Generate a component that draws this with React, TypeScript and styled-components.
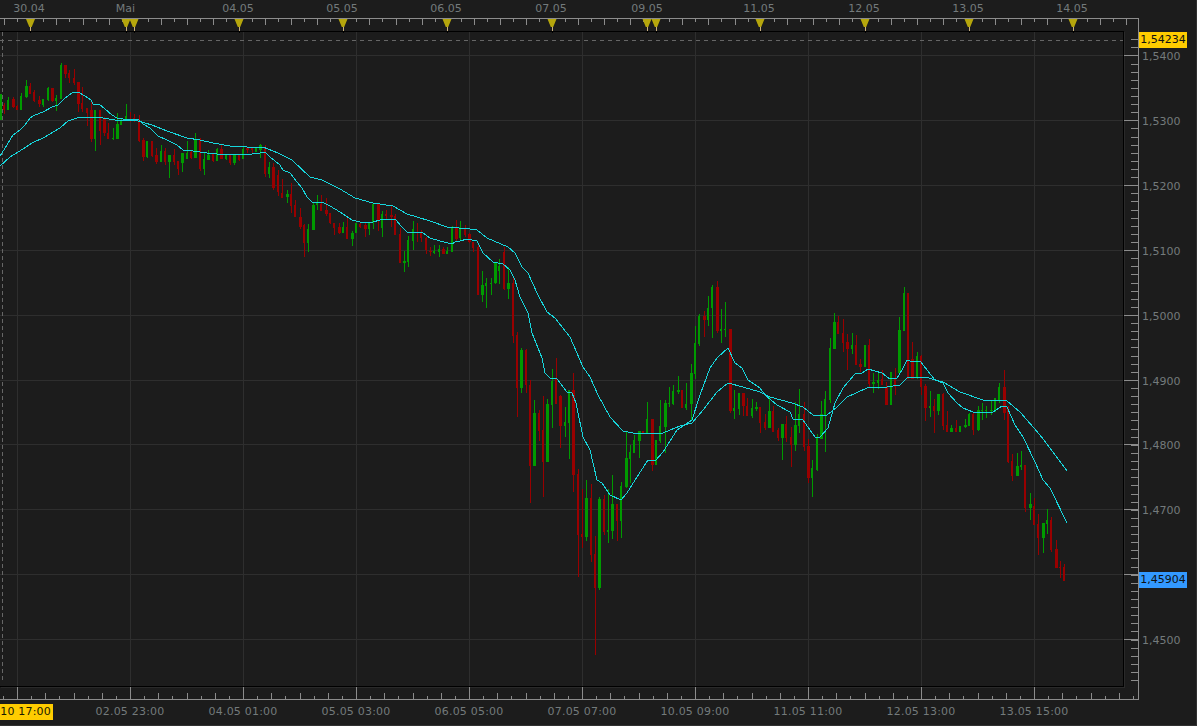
import React from "react";
import styled, { createGlobalStyle } from "styled-components";

const GlobalStyle = createGlobalStyle`
  html, body { margin: 0; padding: 0; background: #1c1c1c; overflow: hidden; }
`;

const BG = "#1c1c1c";
const AXIS = "#8c8c8c";
const GRID = "#2e2e2e";
const UP = "#009a00";
const DOWN = "#990000";
const MA = "#17d6dc";

// kind, high, body top, body bottom, low (pixel rows)
type Candle = ["g" | "r", number, number, number, number];
const raw = `g 94 94 120 120;r 103 105 110 114;g 97 100 110 110;r 97 99 107 108;r 105 106 110 110;g 93 96 110 110;g 80 86 97 98;r 83 86 94 94;r 90 92 101 102;r 96 100 104 107;g 99 99 105 107;g 87 88 100 101;r 88 88 101 102;g 95 98 101 111;g 63 65 99 99;r 65 65 74 78;r 70 73 78 83;r 69 78 83 85;r 82 82 104 112;r 87 103 109 112;r 108 108 113 126;r 102 110 139 142;g 110 110 139 151;r 110 110 131 145;r 117 118 133 136;r 123 133 139 139;g 128 138 139 140;g 113 124 139 139;g 118 120 125 125;g 104 116 120 120;r 112 120 121 122;r 114 118 121 122;r 115 120 141 142;r 138 140 157 161;g 141 141 157 158;r 141 141 156 157;r 148 155 162 164;g 145 151 162 162;r 148 151 162 165;g 155 155 162 178;r 149 155 162 165;r 161 161 169 175;g 153 153 163 172;g 141 153 159 159;r 150 152 158 159;g 133 139 158 158;r 138 140 169 171;g 153 159 169 175;g 150 155 160 160;r 153 153 161 162;g 148 149 161 161;r 145 149 159 159;g 154 155 159 160;r 155 155 163 165;g 154 154 163 165;r 154 155 160 161;g 147 149 159 159;r 148 148 150 153;r 148 148 150 153;g 147 148 152 152;g 144 145 150 158;r 145 147 174 177;g 162 167 174 178;r 163 167 188 190;r 170 175 192 196;r 179 193 198 198;g 190 194 197 203;r 183 194 206 213;r 200 205 217 217;r 208 217 227 229;r 224 225 243 257;g 224 229 243 252;g 203 205 230 230;g 195 203 205 210;r 195 204 211 211;r 198 210 214 216;r 213 213 223 224;r 223 223 228 235;r 223 227 233 234;g 222 227 233 233;r 218 227 239 239;g 231 233 239 246;g 223 223 233 233;r 222 224 227 228;r 223 225 229 237;g 222 223 229 235;g 203 204 223 229;r 203 204 221 231;g 211 214 228 237;r 210 214 216 219;r 206 215 217 227;r 214 216 235 235;r 228 234 263 263;g 251 261 263 272;g 236 240 262 267;g 221 229 241 250;r 223 232 233 242;r 230 232 238 242;r 237 238 250 254;r 247 251 252 256;g 245 251 253 254;g 245 249 252 257;r 247 249 254 254;g 247 251 254 254;g 226 227 252 252;r 220 227 239 241;g 221 227 238 241;r 225 229 235 237;r 233 234 242 243;r 242 242 248 252;r 245 247 295 295;g 271 285 295 302;g 278 283 286 308;g 278 283 284 295;g 262 263 283 284;g 259 266 271 284;r 247 252 289 290;g 267 283 289 299;r 276 283 336 343;r 332 335 388 417;g 348 350 388 393;r 349 350 385 393;r 380 385 466 503;g 400 413 466 466;r 410 413 431 441;r 396 430 462 497;g 399 404 462 462;g 369 381 405 428;r 358 378 404 404;r 395 396 426 448;g 407 422 426 437;g 390 390 423 459;r 373 390 475 492;r 469 474 535 577;r 489 534 537 548;g 480 498 537 541;r 484 498 555 562;r 536 554 588 655;g 497 499 588 590;r 495 499 532 535;g 489 530 532 543;g 475 504 531 539;r 504 504 521 541;g 482 486 521 538;g 432 458 487 488;g 445 452 459 483;g 435 440 453 453;g 431 431 441 458;r 431 431 433 433;g 402 419 433 433;r 419 419 465 471;g 440 440 465 465;g 400 426 441 443;g 400 403 427 453;g 387 403 404 407;g 385 391 404 405;g 376 390 392 394;r 390 390 408 408;g 383 404 408 410;g 364 373 404 420;g 326 343 374 379;g 314 316 344 346;r 311 316 320 337;g 296 308 320 326;g 285 287 308 338;r 281 287 331 333;g 309 329 331 343;g 302 329 330 337;r 329 329 411 413;g 390 408 411 419;g 393 393 409 415;r 393 393 406 416;r 398 406 416 416;g 399 408 416 418;g 402 407 409 411;r 407 407 423 433;r 414 422 428 430;g 397 411 428 428;r 406 411 432 432;r 428 430 438 441;g 424 424 438 460;r 416 424 438 442;r 427 437 445 467;g 402 425 445 451;g 389 414 426 433;r 402 414 447 451;r 439 446 478 483;g 460 468 478 497;g 434 437 470 471;g 401 414 439 439;g 391 399 415 452;g 338 348 400 403;g 313 322 349 349;r 316 322 334 334;r 319 333 343 352;r 334 342 349 370;g 333 345 349 354;r 335 345 365 365;r 359 364 367 372;g 345 345 367 367;r 339 345 384 388;g 373 382 384 393;g 372 380 383 389;r 370 379 385 385;r 382 387 405 405;g 372 372 405 405;r 368 378 387 395;g 317 330 373 373;g 287 293 331 331;r 293 293 379 379;r 342 359 379 379;g 352 356 377 379;r 355 356 387 395;r 384 386 408 421;g 391 406 408 417;r 399 406 411 433;g 394 394 411 415;r 393 394 426 430;r 411 425 432 432;g 425 428 432 432;r 420 428 432 432;g 426 426 432 432;g 419 425 427 428;g 413 414 426 426;r 413 414 430 435;g 406 410 430 431;g 403 410 411 420;g 406 410 411 418;g 401 410 411 415;g 398 398 412 412;g 383 387 401 403;r 370 387 413 420;r 406 407 462 463;r 454 461 476 481;g 453 466 476 476;g 451 465 467 470;r 465 465 508 512;g 493 504 508 520;r 498 506 525 525;r 514 524 538 555;g 523 523 538 553;g 509 520 524 534;r 517 520 550 552;r 540 549 568 568;r 561 567 568 578;r 564 567 581 581`;
const candles = raw.split(";").map((row) => {
  const [k, ...n] = row.split(" ");
  return [k, ...n.map(Number)] as Candle;
});

const fast = "0,156 7,145 13,135 20,130 25,125 30,118 35,115 43,112 52,107 58,105 65,98 72,93 78,92 85,96 91,100 93,104 99,104 105,109 112,115 117,118 123,119 138,119 143,124 150,128 158,136 167,140 177,145 183,150 193,151 200,152 207,153 217,154 230,155 243,154 252,154 260,153 265,152 270,157 280,165 283,170 290,173 297,182 302,188 307,197 312,202 322,202 330,206 340,212 352,220 360,222 373,222 380,220 395,219 402,227 407,232 422,232 430,238 440,241 452,244 455,242 460,241 467,239 477,241 483,253 493,262 503,264 510,270 515,280 520,297 528,313 532,333 542,358 545,373 550,378 557,379 567,392 572,393 576,403 583,437 590,450 597,480 602,483 610,495 621,500 627,493 637,477 648,460 655,461 663,452 677,430 692,420 700,395 710,368 717,358 728,348 735,363 742,368 748,380 760,388 765,395 777,405 790,412 793,419 803,420 810,430 815,437 820,437 828,428 835,403 843,388 855,374 862,373 868,369 882,373 890,379 897,378 902,370 907,360 913,362 920,361 935,380 943,383 948,393 957,403 963,408 973,412 993,412 1002,406 1007,407 1015,425 1023,437 1035,462 1043,480 1050,488 1067,523";
const slow = "0,166 10,157 23,149 32,143 43,138 60,128 68,121 80,117 92,117 103,118 115,120 138,121 152,125 167,131 187,138 200,140 213,143 230,146 247,147 263,147 278,153 292,160 310,177 322,180 340,189 355,198 373,203 393,206 407,214 430,221 447,227 470,229 477,230 487,238 508,247 515,253 522,267 528,273 537,293 547,312 555,318 570,337 583,367 590,377 598,395 610,417 623,431 633,433 647,433 655,434 663,433 670,430 680,426 692,423 703,410 717,392 728,383 743,387 760,392 770,397 792,403 803,407 813,415 827,415 837,407 847,397 867,388 887,387 900,385 908,377 925,377 943,382 960,392 983,400 1007,401 1020,412 1040,435 1053,452 1067,471";

const priceRows = [55, 120, 185, 250, 315, 380, 444, 509, 574, 639];
const priceLabels = [
  { y: 55, t: "1,5400" }, { y: 120, t: "1,5300" }, { y: 185, t: "1,5200" }, { y: 250, t: "1,5100" },
  { y: 315, t: "1,5000" }, { y: 380, t: "1,4900" }, { y: 444, t: "1,4800" }, { y: 509, t: "1,4700" }, { y: 639, t: "1,4500" },
];
const gridCols = Array.from({ length: 10 }, (_, i) => 17 + 113 * i);
const markers = [30.5, 126, 134, 239, 343, 447, 552, 647, 656, 760, 865, 969, 1073];
const topLabels = [
  { x: 29, t: "30.04" }, { x: 125.5, t: "Mai" }, { x: 238, t: "04.05" }, { x: 342, t: "05.05" }, { x: 446, t: "06.05" },
  { x: 551, t: "07.05" }, { x: 647, t: "09.05" }, { x: 759, t: "11.05" }, { x: 864, t: "12.05" }, { x: 968, t: "13.05" }, { x: 1072, t: "14.05" },
];
const timeLabels = ["02.05 23:00", "04.05 01:00", "05.05 03:00", "06.05 05:00", "07.05 07:00", "10.05 09:00", "11.05 11:00", "12.05 13:00", "13.05 15:00"];

const Terminal = styled.div`
  box-sizing: border-box;
  width: 1197px;
  height: 726px;
  display: grid;
  grid-template-columns: 1124px 1fr;
  grid-template-rows: 31px 656px 1fr;
  background: ${BG};
  border-right: 1px solid #303030;
  border-bottom: 1px solid #303030;
  font-family: "DejaVu Sans", Verdana, sans-serif;
  font-size: 11px;
  color: #737a7b;
`;

const TopAxis = styled.header`
  grid-column: 1 / -1;
  position: relative;
  z-index: 2;
`;

const BottomAxis = styled.footer`
  grid-column: 1 / -1;
  position: relative;
`;

const AxisDrawing = styled.svg`
  display: block;
  overflow: visible;
`;

const Plot = styled.main`
  box-sizing: border-box;
  border-top: 1px solid #000;
  border-right: 1px solid #000;
  border-bottom: 1px solid #000;
  box-shadow: 1px 1px 0 #2a2a2a;
  overflow: hidden;
`;

const PriceAxis = styled.aside`
  position: relative;
`;

const DateLabel = styled.span.attrs<{ $x: number }>((p) => ({ style: { left: p.$x } }))<{ $x: number }>`
  position: absolute;
  top: 2px;
  transform: translateX(-50%);
  line-height: 14px;
  white-space: nowrap;
`;

const TimeLabel = styled.span.attrs<{ $x: number }>((p) => ({ style: { left: p.$x } }))<{ $x: number }>`
  position: absolute;
  top: 18px;
  transform: translateX(-50%);
  line-height: 14px;
  letter-spacing: 0.2px;
  white-space: nowrap;
`;

const TimeCursor = styled.span`
  position: absolute;
  left: 0;
  top: 17px;
  width: 53px;
  height: 16px;
  box-sizing: border-box;
  padding-right: 2px;
  background: #ffcc00;
  color: #1a1a00;
  line-height: 16px;
  letter-spacing: 0.2px;
  text-align: right;
  white-space: nowrap;
  overflow: hidden;
`;

const PriceLabel = styled.span.attrs<{ $y: number }>((p) => ({ style: { top: p.$y } }))<{ $y: number }>`
  position: absolute;
  left: 18px;
  line-height: 14px;
  white-space: nowrap;
`;

const PriceTag = styled.span.attrs<{ $y: number }>((p) => ({ style: { top: p.$y } }))<{ $y: number; $bg: string }>`
  position: absolute;
  left: 15px;
  width: 48px;
  height: 16px;
  background: ${(p) => p.$bg};
  color: #101010;
  line-height: 16px;
  text-align: center;
  white-space: nowrap;
`;

const minorTop = Array.from({ length: 91 }, (_, i) => 4.3 + 13.04 * i).filter((x) => x < 1137);
const bottomTicks = Array.from({ length: 81 }, (_, i) => 17 + 14.125 * (i - 1)).filter((x) => x < 1137);
const priceTicks = Array.from({ length: 86 }, (_, i) => 39.2 + (64.9 / 8) * i).filter((y) => y > 31 && y < 687);

const candleX = (i: number) => Math.round(-0.3 + 4.346 * i);

function Chart() {
  return (
    <AxisDrawing width={1123} height={654} viewBox="0 32 1123 654">
      {priceRows.map((y) => (
        <line key={y} x1={0} x2={1123} y1={y + 0.5} y2={y + 0.5} stroke={GRID} shapeRendering="crispEdges" />
      ))}
      {gridCols.map((x) => (
        <line key={x} x1={x + 0.5} x2={x + 0.5} y1={32} y2={686} stroke={GRID} shapeRendering="crispEdges" />
      ))}
      <line x1={0} x2={1123} y1={40.5} y2={40.5} stroke="#666666" strokeDasharray="4 4" shapeRendering="crispEdges" />
      <line x1={2.5} x2={2.5} y1={32} y2={683} stroke="#666666" strokeDasharray="4 3" shapeRendering="crispEdges" />
      {candles.map(([k, hi, top, bot, lo], i) => {
        const x = candleX(i);
        const c = k === "g" ? UP : DOWN;
        return (
          <g key={i} fill={c} shapeRendering="crispEdges">
            <rect x={x} y={hi} width={1} height={Math.max(lo - hi, 1)} />
            <rect x={x - 1} y={top} width={i % 3 === 0 ? 3 : 2} height={Math.max(bot - top, 1)} />
          </g>
        );
      })}
      <polyline points={slow} fill="none" stroke={MA} strokeWidth={1} shapeRendering="crispEdges" />
      <polyline points={fast} fill="none" stroke={MA} strokeWidth={1} shapeRendering="crispEdges" />
    </AxisDrawing>
  );
}

export default function App() {
  return (
    <>
      <GlobalStyle />
      <Terminal>
        <TopAxis>
          <AxisDrawing width={1196} height={31} viewBox="0 0 1196 31">
            <line x1={0} x2={1139} y1={18.5} y2={18.5} stroke={AXIS} shapeRendering="crispEdges" />
            <line x1={1138.5} x2={1138.5} y1={18} y2={31} stroke={AXIS} shapeRendering="crispEdges" />
            {minorTop.map((x, i) => (
              <line key={x} x1={Math.round(x) + 0.5} x2={Math.round(x) + 0.5} y1={19} y2={i % 2 === 0 ? 25 : 22} stroke={AXIS} shapeRendering="crispEdges" />
            ))}
            {markers.map((x) => (
              <g key={x}>
                <polygon points={`${x - 4.5},19 ${x + 4.5},19 ${x + 1.2},27 ${x - 1.2},27`} fill="#b5a60c" />
                <rect x={Math.floor(x)} y={27} width={1} height={4} fill="#c9b080" />
                <rect x={Math.floor(x)} y={31} width={1} height={2} fill="#000" />
              </g>
            ))}
          </AxisDrawing>
          {topLabels.map((l) => (
            <DateLabel key={l.t} $x={l.x}>{l.t}</DateLabel>
          ))}
        </TopAxis>

        <Plot>
          <Chart />
        </Plot>

        <PriceAxis>
          <AxisDrawing width={72} height={656} viewBox="1124 31 72 656">
            <line x1={1138.5} x2={1138.5} y1={31} y2={687} stroke={AXIS} shapeRendering="crispEdges" />
            {priceTicks.map((y) => (
              <line key={y} x1={1131} x2={1138} y1={Math.round(y) + 0.5} y2={Math.round(y) + 0.5} stroke={AXIS} shapeRendering="crispEdges" />
            ))}
            {priceRows.map((y) => (
              <line key={y} x1={1124} x2={1138} y1={y + 0.5} y2={y + 0.5} stroke={AXIS} shapeRendering="crispEdges" />
            ))}
          </AxisDrawing>
          {priceLabels.map((l) => (
            <PriceLabel key={l.t} $y={l.y - 31 - 5}>{l.t}</PriceLabel>
          ))}
          <PriceTag $y={1} $bg="#ffcc00">1,54234</PriceTag>
          <PriceTag $y={541} $bg="#3399ff">1,45904</PriceTag>
        </PriceAxis>

        <BottomAxis>
          <AxisDrawing width={1196} height={38} viewBox="0 687 1196 38">
            <line x1={0} x2={1139} y1={699.5} y2={699.5} stroke={AXIS} shapeRendering="crispEdges" />
            <line x1={1138.5} x2={1138.5} y1={687} y2={700} stroke={AXIS} shapeRendering="crispEdges" />
            {bottomTicks.map((x, i) => {
              const k = i - 1;
              const top = k % 8 === 0 ? 687 : k % 2 === 0 ? 693 : 696;
              const rx = Math.round(x) + 0.5;
              return <line key={i} x1={rx} x2={rx} y1={top} y2={699} stroke={AXIS} shapeRendering="crispEdges" />;
            })}
          </AxisDrawing>
          <TimeCursor>10 17:00</TimeCursor>
          {timeLabels.map((t, i) => (
            <TimeLabel key={t} $x={130 + 113 * i}>{t}</TimeLabel>
          ))}
        </BottomAxis>
      </Terminal>
    </>
  );
}
